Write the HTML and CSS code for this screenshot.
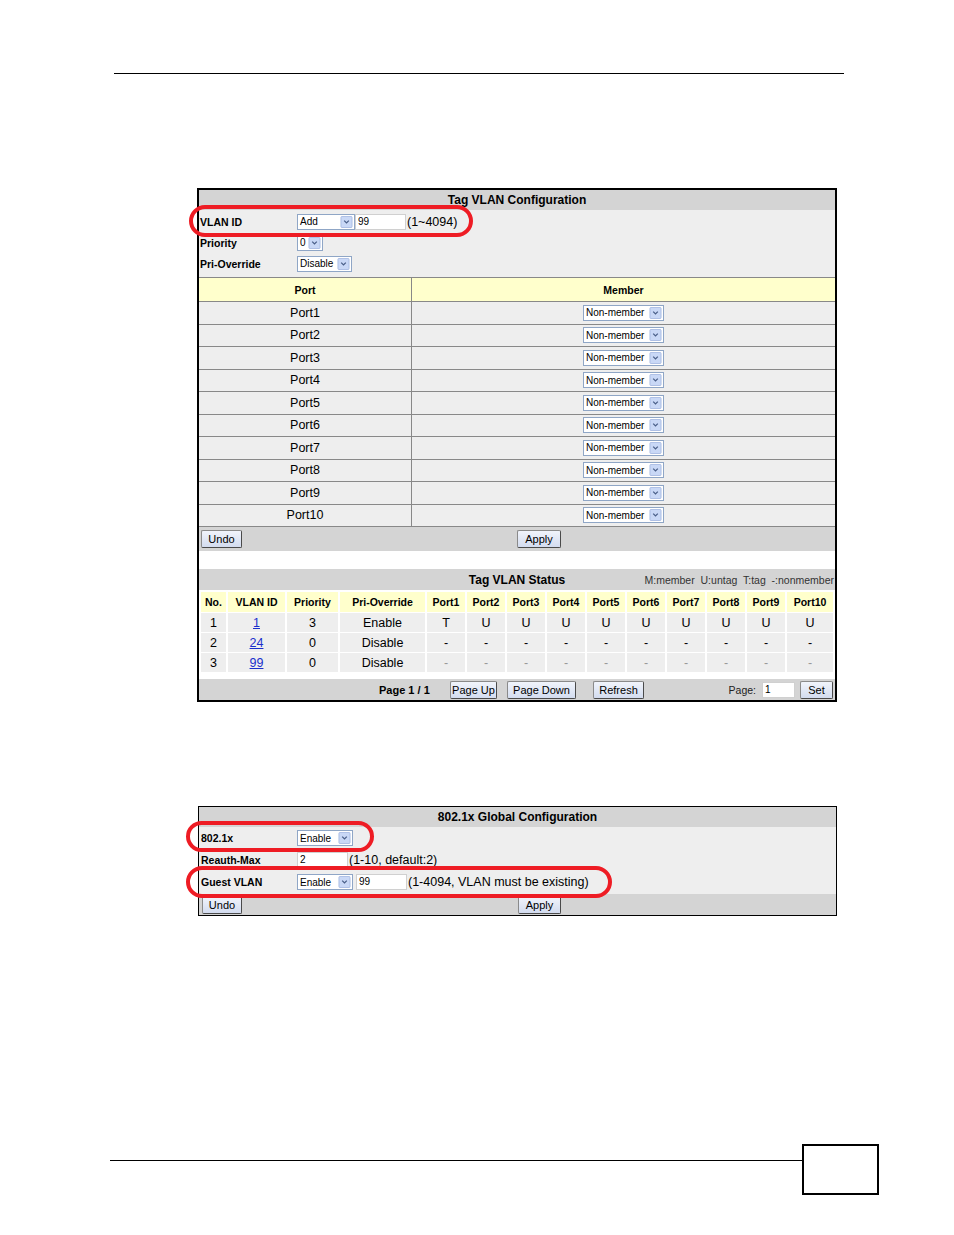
FILE: index.html
```html
<!DOCTYPE html>
<html lang="en">
<head>
  <meta charset="UTF-8">
  <title>Tag VLAN Configuration</title>
  <link rel="stylesheet" href="styles.css">
</head>
<body>
  <div class="rule-top"></div>

  <!-- Tag VLAN screen -->
  <div class="panel panel-vlan">
    <div class="title-bar">Tag VLAN Configuration</div>
    <div class="form-area">
      <div class="form-row">
        <span class="label">VLAN ID</span>
        <span class="select w-add">Add<svg class="arrow" viewBox="0 0 13 13"><rect x="0.5" y="0.5" width="12" height="12" rx="1" fill="#c9d8f6" stroke="#a8bbe2"/><path d="M4 5l2.5 2.5L9 5" fill="none" stroke="#4a5f88" stroke-width="1.4"/></svg></span>
        <span class="textbox w-vid">99</span>
        <span class="hint">(1~4094)</span>
      </div>
      <div class="form-row">
        <span class="label">Priority</span>
        <span class="select w-prio">0<svg class="arrow" viewBox="0 0 13 13"><rect x="0.5" y="0.5" width="12" height="12" rx="1" fill="#c9d8f6" stroke="#a8bbe2"/><path d="M4 5l2.5 2.5L9 5" fill="none" stroke="#4a5f88" stroke-width="1.4"/></svg></span>
      </div>
      <div class="form-row">
        <span class="label">Pri-Override</span>
        <span class="select w-dis">Disable<svg class="arrow" viewBox="0 0 13 13"><rect x="0.5" y="0.5" width="12" height="12" rx="1" fill="#c9d8f6" stroke="#a8bbe2"/><path d="M4 5l2.5 2.5L9 5" fill="none" stroke="#4a5f88" stroke-width="1.4"/></svg></span>
      </div>
    </div>

    <table class="port-table">
      <tr><th class="col-port">Port</th><th>Member</th></tr>
      <tr><td class="col-port">Port1</td><td><span class="select w-member">Non-member<svg class="arrow" viewBox="0 0 13 13"><rect x="0.5" y="0.5" width="12" height="12" rx="1" fill="#c9d8f6" stroke="#a8bbe2"/><path d="M4 5l2.5 2.5L9 5" fill="none" stroke="#4a5f88" stroke-width="1.4"/></svg></span></td></tr>
      <tr><td class="col-port">Port2</td><td><span class="select w-member">Non-member<svg class="arrow" viewBox="0 0 13 13"><rect x="0.5" y="0.5" width="12" height="12" rx="1" fill="#c9d8f6" stroke="#a8bbe2"/><path d="M4 5l2.5 2.5L9 5" fill="none" stroke="#4a5f88" stroke-width="1.4"/></svg></span></td></tr>
      <tr><td class="col-port">Port3</td><td><span class="select w-member">Non-member<svg class="arrow" viewBox="0 0 13 13"><rect x="0.5" y="0.5" width="12" height="12" rx="1" fill="#c9d8f6" stroke="#a8bbe2"/><path d="M4 5l2.5 2.5L9 5" fill="none" stroke="#4a5f88" stroke-width="1.4"/></svg></span></td></tr>
      <tr><td class="col-port">Port4</td><td><span class="select w-member">Non-member<svg class="arrow" viewBox="0 0 13 13"><rect x="0.5" y="0.5" width="12" height="12" rx="1" fill="#c9d8f6" stroke="#a8bbe2"/><path d="M4 5l2.5 2.5L9 5" fill="none" stroke="#4a5f88" stroke-width="1.4"/></svg></span></td></tr>
      <tr><td class="col-port">Port5</td><td><span class="select w-member">Non-member<svg class="arrow" viewBox="0 0 13 13"><rect x="0.5" y="0.5" width="12" height="12" rx="1" fill="#c9d8f6" stroke="#a8bbe2"/><path d="M4 5l2.5 2.5L9 5" fill="none" stroke="#4a5f88" stroke-width="1.4"/></svg></span></td></tr>
      <tr><td class="col-port">Port6</td><td><span class="select w-member">Non-member<svg class="arrow" viewBox="0 0 13 13"><rect x="0.5" y="0.5" width="12" height="12" rx="1" fill="#c9d8f6" stroke="#a8bbe2"/><path d="M4 5l2.5 2.5L9 5" fill="none" stroke="#4a5f88" stroke-width="1.4"/></svg></span></td></tr>
      <tr><td class="col-port">Port7</td><td><span class="select w-member">Non-member<svg class="arrow" viewBox="0 0 13 13"><rect x="0.5" y="0.5" width="12" height="12" rx="1" fill="#c9d8f6" stroke="#a8bbe2"/><path d="M4 5l2.5 2.5L9 5" fill="none" stroke="#4a5f88" stroke-width="1.4"/></svg></span></td></tr>
      <tr><td class="col-port">Port8</td><td><span class="select w-member">Non-member<svg class="arrow" viewBox="0 0 13 13"><rect x="0.5" y="0.5" width="12" height="12" rx="1" fill="#c9d8f6" stroke="#a8bbe2"/><path d="M4 5l2.5 2.5L9 5" fill="none" stroke="#4a5f88" stroke-width="1.4"/></svg></span></td></tr>
      <tr><td class="col-port">Port9</td><td><span class="select w-member">Non-member<svg class="arrow" viewBox="0 0 13 13"><rect x="0.5" y="0.5" width="12" height="12" rx="1" fill="#c9d8f6" stroke="#a8bbe2"/><path d="M4 5l2.5 2.5L9 5" fill="none" stroke="#4a5f88" stroke-width="1.4"/></svg></span></td></tr>
      <tr><td class="col-port">Port10</td><td><span class="select w-member">Non-member<svg class="arrow" viewBox="0 0 13 13"><rect x="0.5" y="0.5" width="12" height="12" rx="1" fill="#c9d8f6" stroke="#a8bbe2"/><path d="M4 5l2.5 2.5L9 5" fill="none" stroke="#4a5f88" stroke-width="1.4"/></svg></span></td></tr>
    </table>

    <div class="button-bar">
      <button class="btn btn-undo">Undo</button>
      <button class="btn btn-apply">Apply</button>
    </div>

    <div class="spacer"></div>

    <div class="status-bar">
      <span></span>
      <span class="status-title">Tag VLAN Status</span>
      <span class="legend">M:member&nbsp; U:untag&nbsp; T:tag&nbsp; -:nonmember</span>
    </div>

    <table class="status-table">
      <colgroup>
        <col class="c-no"><col class="c-vid"><col class="c-prio"><col class="c-over">
        <col class="c-port"><col class="c-port"><col class="c-port"><col class="c-port"><col class="c-port">
        <col class="c-port"><col class="c-port"><col class="c-port"><col class="c-port"><col class="c-port10">
      </colgroup>
      <tr>
        <th>No.</th><th>VLAN ID</th><th>Priority</th><th>Pri-Override</th>
        <th>Port1</th><th>Port2</th><th>Port3</th><th>Port4</th><th>Port5</th>
        <th>Port6</th><th>Port7</th><th>Port8</th><th>Port9</th><th>Port10</th>
      </tr>
      <tr>
        <td>1</td><td><a href="#">1</a></td><td>3</td><td>Enable</td>
        <td>T</td><td>U</td><td>U</td><td>U</td><td>U</td>
        <td>U</td><td>U</td><td>U</td><td>U</td><td>U</td>
      </tr>
      <tr>
        <td>2</td><td><a href="#">24</a></td><td>0</td><td>Disable</td>
        <td>-</td><td>-</td><td>-</td><td>-</td><td>-</td>
        <td>-</td><td>-</td><td>-</td><td>-</td><td>-</td>
      </tr>
      <tr class="faint">
        <td>3</td><td><a href="#">99</a></td><td>0</td><td>Disable</td>
        <td>-</td><td>-</td><td>-</td><td>-</td><td>-</td>
        <td>-</td><td>-</td><td>-</td><td>-</td><td>-</td>
      </tr>
    </table>

    <div class="page-bar">
      <span class="page-count">Page 1 / 1</span>
      <button class="btn btn-pgup">Page Up</button>
      <button class="btn btn-pgdn">Page Down</button>
      <button class="btn btn-refresh">Refresh</button>
      <span class="page-goto">Page:</span>
      <span class="textbox w-page">1</span>
      <button class="btn btn-set">Set</button>
    </div>

    <div class="callout callout-vid"></div>
  </div>

  <!-- 802.1x screen -->
  <div class="panel panel-dot1x">
    <div class="title-bar">802.1x Global Configuration</div>
    <div class="form-area form-dot1x">
      <div class="form-row">
        <span class="label">802.1x</span>
        <span class="select w-enable">Enable<svg class="arrow" viewBox="0 0 13 13"><rect x="0.5" y="0.5" width="12" height="12" rx="1" fill="#c9d8f6" stroke="#a8bbe2"/><path d="M4 5l2.5 2.5L9 5" fill="none" stroke="#4a5f88" stroke-width="1.4"/></svg></span>
      </div>
      <div class="form-row">
        <span class="label">Reauth-Max</span>
        <span class="textbox w-reauth">2</span>
        <span class="hint">(1-10, default:2)</span>
      </div>
      <div class="form-row">
        <span class="label">Guest VLAN</span>
        <span class="select w-enable">Enable<svg class="arrow" viewBox="0 0 13 13"><rect x="0.5" y="0.5" width="12" height="12" rx="1" fill="#c9d8f6" stroke="#a8bbe2"/><path d="M4 5l2.5 2.5L9 5" fill="none" stroke="#4a5f88" stroke-width="1.4"/></svg></span>
        <span class="textbox w-guest">99</span>
        <span class="hint">(1-4094, VLAN must be existing)</span>
      </div>
    </div>
    <div class="button-bar bar-dot1x">
      <button class="btn btn-undo">Undo</button>
      <button class="btn btn-apply">Apply</button>
    </div>

    <div class="callout callout-dot1x"></div>
    <div class="callout callout-guest"></div>
  </div>

  <div class="page-footer">
    <div class="footer-rule"></div>
    <div class="page-number-box"></div>
  </div>
</body>
</html>
```

FILE: styles.css
```css
body {
  margin: 0;
  font-family: "Liberation Sans", Arial, sans-serif;
  color: #000;
  background: #fff;
}

.rule-top {
  width: 730px;
  margin: 73px 0 0 114px;
  border-top: 1px solid #000;
}

.panel {
  position: relative;
  background: #fff;
}

.panel-vlan {
  width: 636px;
  margin: 114px 0 0 197px;
  border: 2px solid #000;
}

.panel-dot1x {
  width: 637px;
  margin: 104px 0 0 198px;
  border: 1px solid #000;
}

.title-bar {
  height: 20px;
  line-height: 20px;
  background: #d4d4d4;
  text-align: center;
  font-weight: bold;
  font-size: 12px;
}

.form-area {
  background: #eee;
  padding: 1px 0 3px;
}

.form-dot1x {
  padding: 0 0 1px;
}

.form-row {
  display: flex;
  align-items: center;
  height: 21px;
}

.form-dot1x .form-row {
  height: 22px;
}

.form-row .label {
  width: 97px;
  padding-left: 1px;
  font-weight: bold;
  font-size: 10.5px;
}

.form-dot1x .label {
  width: 96px;
  padding-left: 2px;
}

.select {
  display: inline-flex;
  align-items: center;
  justify-content: space-between;
  box-sizing: border-box;
  height: 16px;
  padding-left: 2px;
  border: 1px solid #8fa6c6;
  background: #fff;
  font-size: 10px;
}

.select .arrow {
  width: 13px;
  height: 12px;
  margin-right: 1px;
}

.w-add { width: 58px; }
.w-prio { width: 26px; }
.w-dis { width: 55px; }
.w-member { width: 81px; vertical-align: middle; }
.w-enable { width: 56px; }

.textbox {
  box-sizing: border-box;
  height: 16px;
  line-height: 14px;
  padding-left: 2px;
  border: 1px solid #d0d0d0;
  background: #fff;
  font-size: 10px;
}

.w-vid { width: 51px; }
.w-reauth { width: 51px; }
.w-guest { width: 51px; margin-left: 3px; }
.w-page { width: 33px; margin-left: 6px; }

.hint {
  margin-left: 1px;
  font-size: 12.5px;
}

/* port membership */
.port-table {
  width: 100%;
  border-collapse: collapse;
}

.port-table th,
.port-table td {
  padding: 0;
  border-top: 1px solid #888;
  text-align: center;
}

.port-table th {
  height: 23px;
  background: #ffffcc;
  font-size: 10.5px;
}

.port-table td {
  height: 21.5px;
  background: #eee;
  font-size: 12.5px;
}

.port-table .col-port {
  width: 212px;
  border-right: 1px solid #888;
}

.button-bar {
  display: flex;
  align-items: center;
  height: 24px;
  padding-left: 2px;
  background: #d4d4d4;
  border-top: 1px solid #888;
}

.bar-dot1x {
  height: 21px;
  padding-left: 3px;
  border-top: none;
}

.btn {
  box-sizing: border-box;
  height: 18px;
  padding: 0;
  border: 1px solid;
  border-color: #8a8a8a #4a4a4a #4a4a4a #8a8a8a;
  border-radius: 2px;
  background: linear-gradient(#f1f4fb, #d3dcef);
  font-family: "Liberation Sans", Arial, sans-serif;
  font-size: 11px;
  color: #000;
}

.btn-undo { width: 41px; }
.btn-apply { width: 44px; margin-left: 275px; }
.bar-dot1x .btn-undo { width: 40px; }
.bar-dot1x .btn-apply { width: 43px; margin-left: 276px; }

.spacer {
  height: 18px;
}

/* status */
.status-bar {
  display: grid;
  grid-template-columns: 1fr auto 1fr;
  align-items: center;
  height: 21px;
  background: #d4d4d4;
}

.status-title {
  font-weight: bold;
  font-size: 12px;
}

.legend {
  justify-self: end;
  padding-right: 1px;
  font-size: 10.5px;
  color: #333;
}

.status-table {
  width: 100%;
  margin-top: 1px;
  table-layout: fixed;
  border-spacing: 2px 1px;
}

.status-table th,
.status-table td {
  padding: 0;
  text-align: center;
}

.status-table th {
  height: 20px;
  background: #ffffcc;
  font-size: 10.5px;
}

.status-table td {
  height: 19px;
  background: #eee;
  font-size: 12.5px;
}

.status-table a {
  color: #1a2fcc;
}

.status-table .faint td {
  color: #999;
}

.status-table .faint td:nth-child(-n+4) {
  color: #000;
}

.c-no { width: 25px; }
.c-vid { width: 57px; }
.c-prio { width: 51px; }
.c-over { width: 85px; }
.c-port { width: 38px; }
.c-port10 { width: 46px; }

.page-bar {
  display: flex;
  align-items: center;
  height: 21px;
  margin-top: 6px;
  background: #d4d4d4;
  font-size: 11px;
}

.page-count {
  width: 71px;
  margin-left: 180px;
  font-weight: bold;
}

.btn-pgup { width: 47px; }
.btn-pgdn { width: 69px; margin-left: 10px; }
.btn-refresh { width: 51px; margin-left: 17px; }

.page-goto {
  margin-left: auto;
  font-size: 10.5px;
  color: #222;
}

.btn-set {
  width: 33px;
  margin: 0 2px 0 5px;
}

/* red highlight callouts drawn over the screens */
.callout {
  position: absolute;
  box-sizing: border-box;
  border: 4px solid #ee1c24;
  border-radius: 16px;
}

.callout-vid { left: -10px; top: 15px; width: 284px; height: 32px; }
.callout-dot1x { left: -13px; top: 14px; width: 188px; height: 31px; }
.callout-guest { left: -13px; top: 59px; width: 426px; height: 32px; }

.page-footer {
  display: flex;
  align-items: flex-start;
  margin: 228px 0 0 110px;
}

.footer-rule {
  width: 692px;
  height: 16px;
  border-bottom: 1px solid #000;
}

.page-number-box {
  width: 73px;
  height: 47px;
  border: 2px solid #000;
}
```
